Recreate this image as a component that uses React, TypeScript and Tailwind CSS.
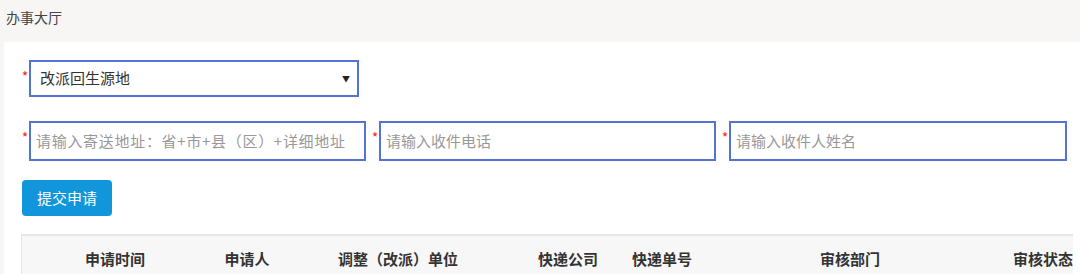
import React from "react";

const font = { fontFamily: '"Noto Sans CJK SC", "Noto Sans", sans-serif' };

function Star() {
  return <span className="w-[8px] self-start text-[14px] leading-none text-[#ff2020] mt-[9px] text-center">*</span>;
}

const cols: { label: string; w: string }[] = [
  { label: "申请时间", w: "w-[186px]" },
  { label: "申请人", w: "w-[78px]" },
  { label: "调整（改派）单位", w: "w-[224px]" },
  { label: "快递公司", w: "w-[116px]" },
  { label: "快递单号", w: "w-[72px]" },
  { label: "审核部门", w: "w-[304px]" },
  { label: "审核状态", w: "w-[82px]" },
];

export default function App() {
  return (
    <div style={font} className="w-[1080px] h-[274px] overflow-hidden bg-[#f7f6f4] text-[#333]">
      <div className="h-[42px] pl-[6px] pt-[6px] text-[14px] leading-[22px] text-[#444]">办事大厅</div>
      <div className="ml-[4px] bg-white h-[232px] pl-[17px] pt-[18px]">
        <div className="flex items-stretch">
          <Star />
          <div className="w-[330px] h-[37px] border-2 border-[#5573d6] flex items-center justify-between pl-[9px] pr-[7px]">
            <span className="text-[15px] text-[#333]">改派回生源地</span>
            <span className="text-[8px] text-[#222]">▼</span>
          </div>
        </div>
        <div className="flex mt-[24px] gap-[5px]">
          {[
            ["请输入寄送地址：省+市+县（区）+详细地址", "w-[337px]", "tracking-[0.7px]"],
            ["请输入收件电话", "w-[337px]", ""],
            ["请输入收件人姓名", "w-[338px]", ""],
          ].map(([ph, w, t]) => (
            <div key={ph} className="flex">
              <Star />
              <div className={`${w} ${t} h-[40px] border-2 border-[#5573d6] flex items-center pl-[5px] text-[15px] text-[#999] whitespace-nowrap overflow-hidden`}>
                {ph}
              </div>
            </div>
          ))}
        </div>
        <button className="mt-[19px] ml-[1px] w-[90px] h-[36px] rounded-[4px] bg-[#1296db] text-white text-[15px] flex items-center justify-center">
          提交申请
        </button>
        <div className="mt-[18px] w-[1052px] overflow-hidden border-t-2 border-l border-[#e6e6e6] bg-[#f7f7f7] h-[60px]">
          <div className="flex pt-[12px] w-[1100px]">
            {cols.map((c) => (
              <div key={c.label} className={`${c.w} shrink-0 text-center text-[15px] font-bold leading-[22px] text-[#333] whitespace-nowrap`}>
                {c.label}
              </div>
            ))}
          </div>
        </div>
      </div>
    </div>
  );
}
